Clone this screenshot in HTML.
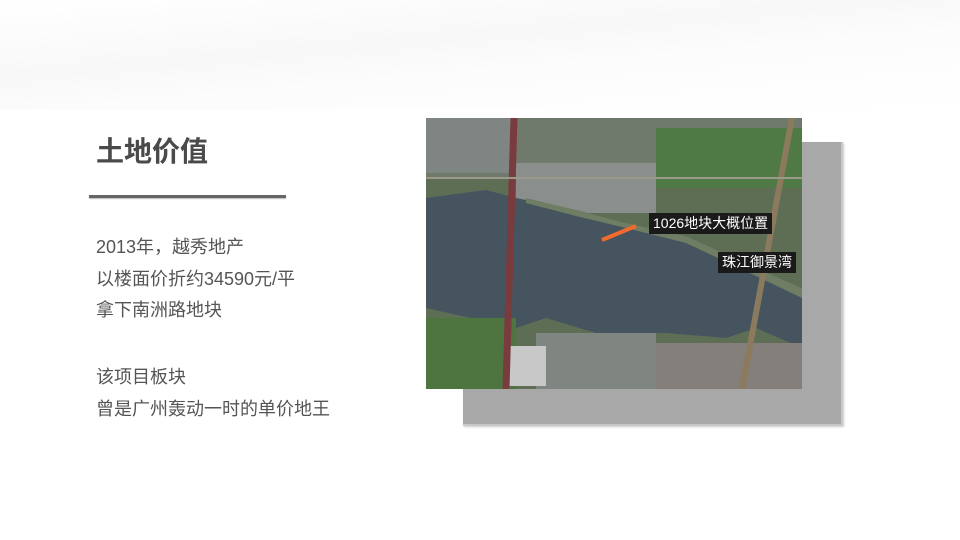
<!DOCTYPE html>
<html><head><meta charset="utf-8"><style>
body{margin:0;width:960px;height:540px;overflow:hidden;background:#fff;font-family:"Liberation Sans","Noto Sans CJK SC",sans-serif;position:relative}
.bg{position:absolute;left:0;top:0;width:960px;height:110px;background:linear-gradient(175deg,#fff 0%,#f8f8f8 40%,#fcfcfc 60%,#fff 100%)}
.h{position:absolute;left:96px;top:130px;font-size:28px;color:#4a4a4a;font-weight:bold;letter-spacing:0}
.line{position:absolute;left:89px;top:195px;width:197px;height:3px;background:#666;box-shadow:0 1px 1px #bbb}
.t{position:absolute;left:96px;font-size:18px;color:#555}
.sh{position:absolute;left:463px;top:142px;width:378px;height:282px;background:#a8a8a8;border:2px solid #c8c8c8;border-top:none;border-left:none;box-shadow:1px 1px 2px #ccc}
.map{position:absolute;left:426px;top:118px;width:376px;height:271px}
.lab{position:absolute;background:#1a1a1a;color:#fff;font-size:14px;padding:1px 4px;line-height:19px}
</style></head><body>
<div class="bg"></div>
<div class="h">土地价值</div>
<div class="line"></div>
<div class="t" style="top:233px">2013年，越秀地产</div>
<div class="t" style="top:265px">以楼面价折约34590元/平</div>
<div class="t" style="top:296px">拿下南洲路地块</div>
<div class="t" style="top:363px">该项目板块</div>
<div class="t" style="top:395px">曾是广州轰动一时的单价地王</div>
<div class="sh"></div>
<svg class="map" viewBox="0 0 376 271">
<rect width="376" height="271" fill="#5d6e55"/>
<rect x="0" y="0" width="376" height="60" fill="#6f7a6c"/>
<rect x="90" y="45" width="140" height="50" fill="#8a8e8c"/>
<rect x="230" y="10" width="146" height="60" fill="#4f7a45"/>
<rect x="0" y="0" width="90" height="55" fill="#7e8582"/>
<polygon points="0,80 60,72 90,80 150,92 200,105 260,118 330,150 376,170 376,230 330,210 300,220 240,215 170,215 120,200 90,210 0,190" fill="#45545e"/>
<polygon points="376,170 376,180 330,158 260,125 200,110 150,98 100,85 100,80 150,92 200,105 260,118 330,150" fill="#6e7d63"/>
<rect x="0" y="200" width="90" height="71" fill="#4e7440"/>
<rect x="110" y="215" width="120" height="56" fill="#7f8581"/>
<rect x="230" y="225" width="146" height="46" fill="#847f7a"/>
<rect x="80" y="228" width="40" height="40" fill="#c8c8c8"/>
<line x1="88" y1="0" x2="80" y2="271" stroke="#7a3b3e" stroke-width="7"/>
<line x1="366" y1="0" x2="316" y2="271" stroke="#8c7a5e" stroke-width="6"/>
<line x1="0" y1="60" x2="376" y2="60" stroke="#9a9a8a" stroke-width="2"/>
<line x1="176" y1="122" x2="210" y2="108" stroke="#f26a2e" stroke-width="4"/>
</svg>
<div class="lab" style="left:649px;top:213px">1026地块大概位置</div>
<div class="lab" style="left:718px;top:252px">珠江御景湾</div>
</body></html>
